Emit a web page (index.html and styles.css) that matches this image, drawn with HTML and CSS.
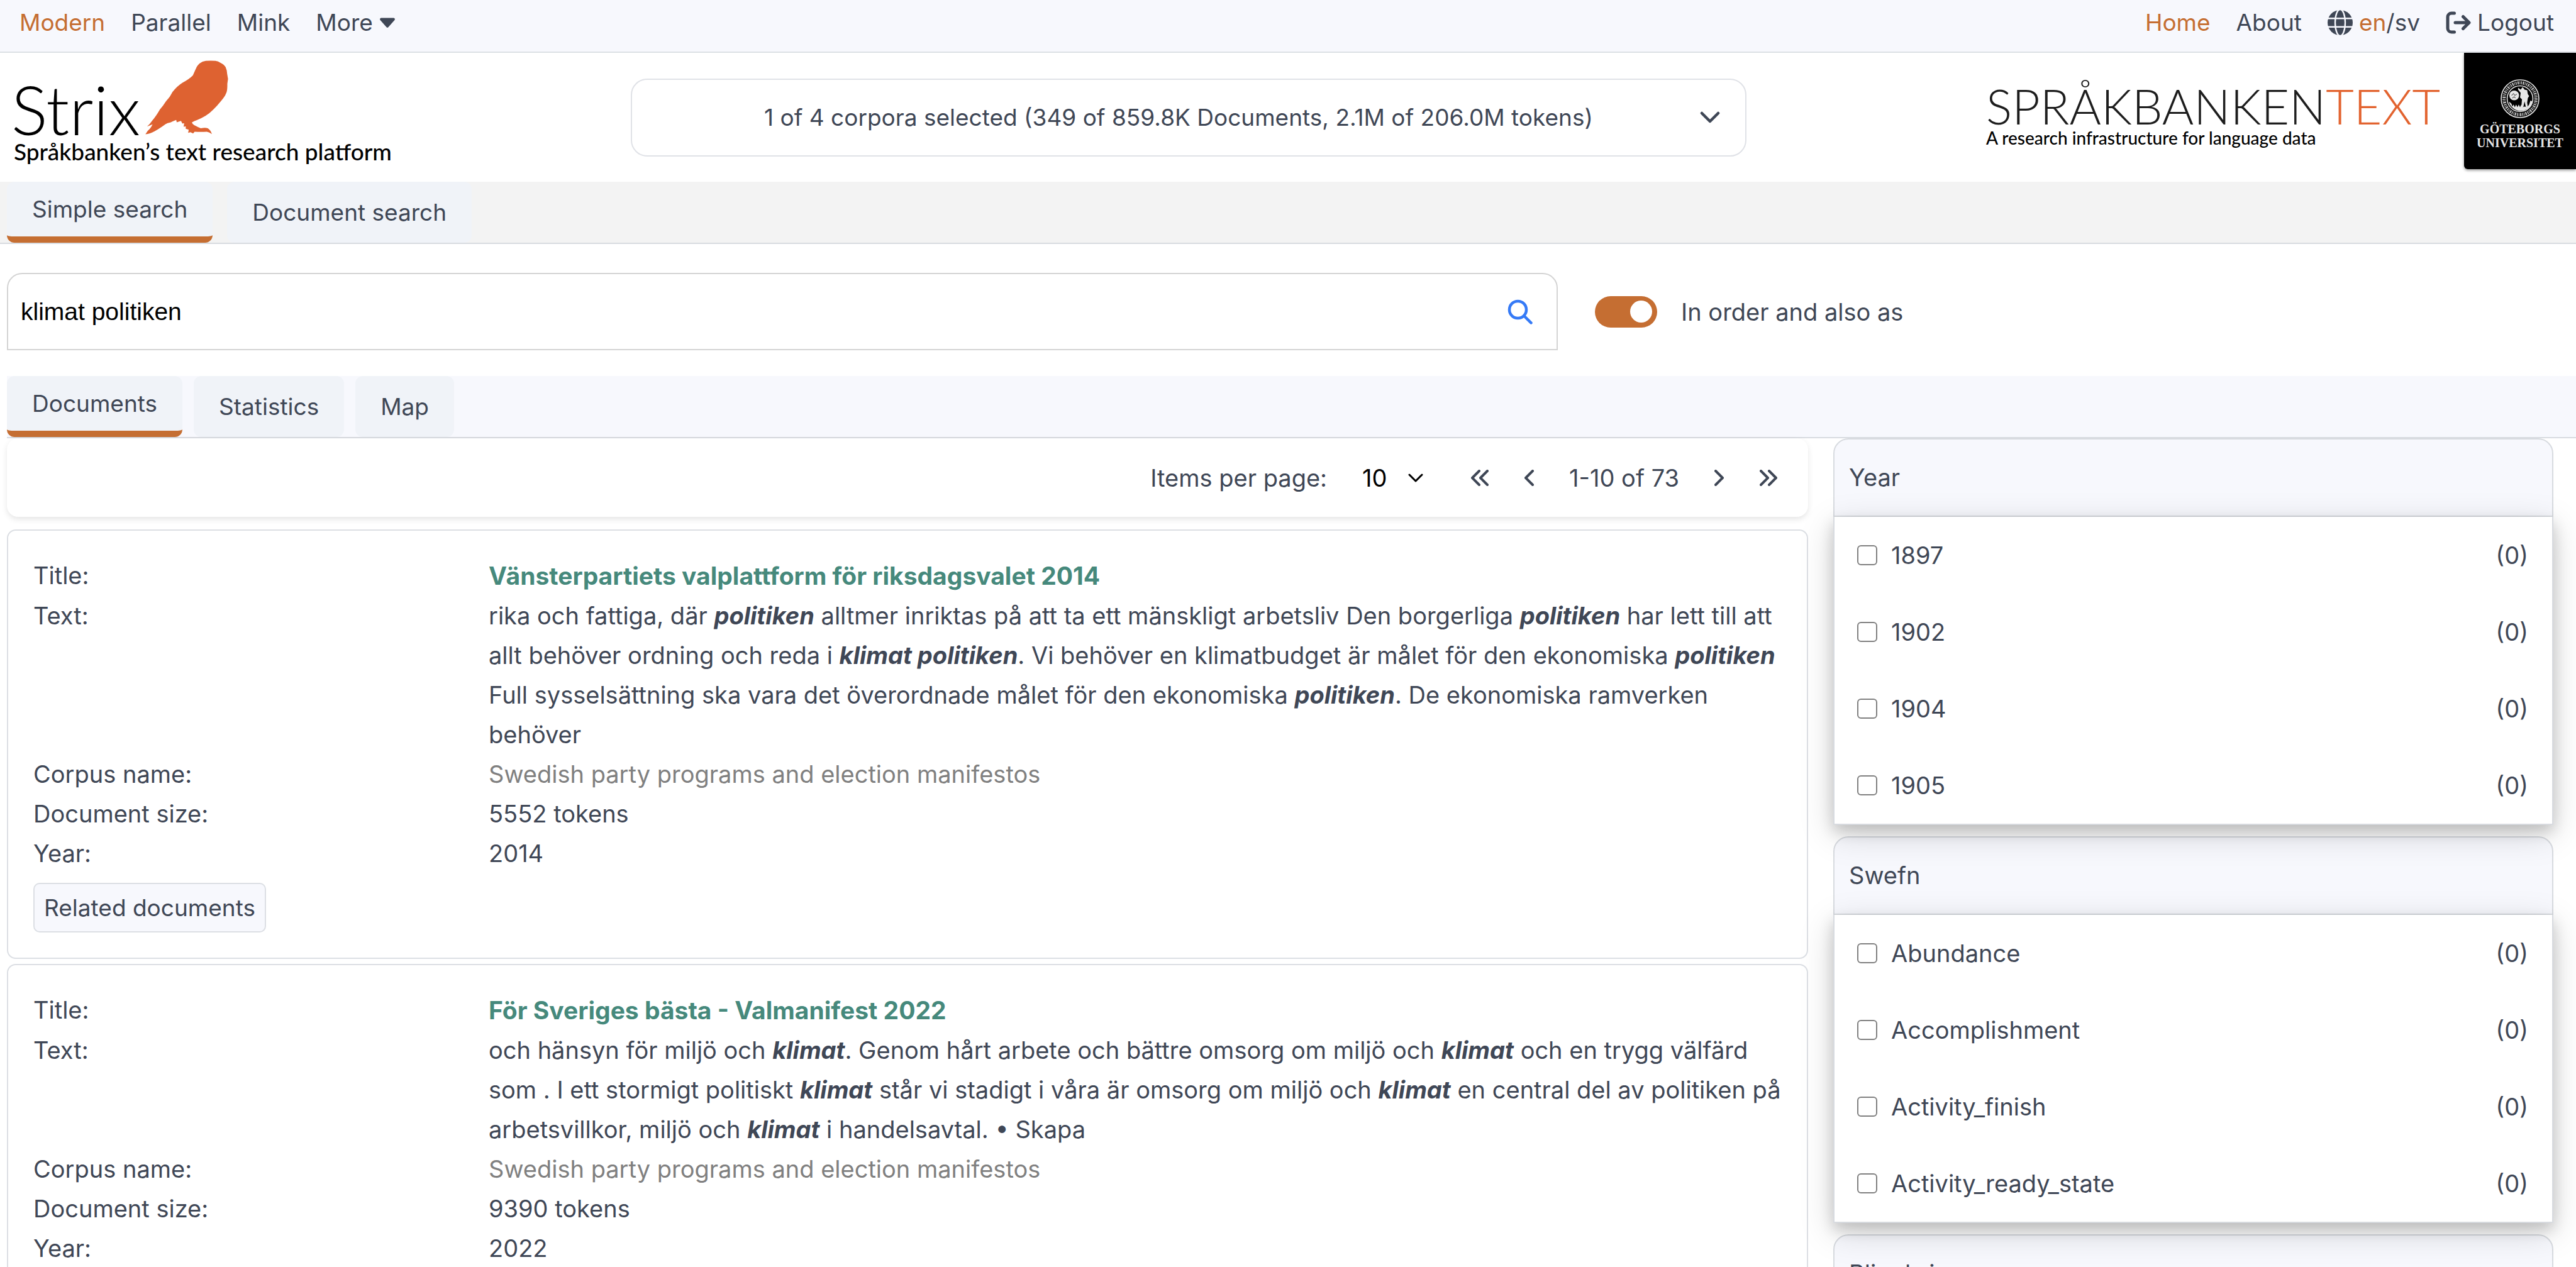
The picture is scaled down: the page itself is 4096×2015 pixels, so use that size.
FILE: index.html
```
<!DOCTYPE html>
<html lang="en">
<head>
<meta charset="utf-8">
<title>Strix</title>
<link rel="stylesheet" href="styles.css">
</head>
<body>
<nav class="topbar">
  <div class="topbar-group">
    <a class="current" href="#modern">Modern</a>
    <a href="#parallel">Parallel</a>
    <a href="#mink">Mink</a>
    <button class="more" type="button">More
      <svg class="caret" viewBox="0 0 24 16" aria-hidden="true"><path d="M3 1h18a2 2 0 0 1 1.500 3.300l-9 10.200a2 2 0 0 1-3 0l-9-10.200A2 2 0 0 1 3 1z" fill="currentColor"/></svg>
    </button>
  </div>
  <div class="topbar-group">
    <a class="current" href="#home">Home</a>
    <a href="#about">About</a>
    <a class="language" href="#language">
      <svg class="globe" viewBox="0 0 40 40" aria-hidden="true"><circle cx="20" cy="20" r="20" fill="currentColor"/><g fill="none" stroke="#f7f8fd" stroke-width="2.400"><ellipse cx="20" cy="20" rx="8" ry="21"/><path d="M0 13.200h40M0 26.800h40"/></g></svg>
      <span><span class="current">en</span>/sv</span>
    </a>
    <a class="logout" href="#logout">
      <svg class="exit" viewBox="0 0 40 36" aria-hidden="true"><g fill="none" stroke="currentColor" stroke-width="5" stroke-linecap="round" stroke-linejoin="round"><path d="M13.500 3H9a6 6 0 0 0-6 6v18a6 6 0 0 0 6 6h4.500"/><path d="M15 18h21M27.500 8.500L37 18l-9.500 9.500"/></g></svg>
      Logout
    </a>
  </div>
</nav>

<header class="header">
  <a class="strix" href="#home">
    <span class="strix-mark">
      <span class="strix-name">Strix</span>
      <svg class="owl" viewBox="40 45 602 540" aria-hidden="true"><path fill="#de6231" d="M480 49 Q515 45 550 49 Q570 52 585 62 Q612 75 623 93 Q633 113 635 145 L641 180 L636 215 Q637 260 630 278 Q622 300 608 318 Q596 334 584 348 Q560 378 535 402 Q508 430 477 449 Q445 468 415 480 Q392 488 378 497 Q382 508 393 515 Q420 530 443 539 Q475 533 494 539 Q515 552 524 582 Q505 566 487 564 Q445 568 398 564 L387 577 L368 568 L351 572 L355 550 L333 543 L334 525 L318 528 L322 503 L309 505 L299 486 L268 496 L264 479 Q240 488 222 497 Q200 500 186 509 Q140 543 107 561 Q75 580 40 583 L57 557 Q78 542 92 511 L52 527 Q75 505 88 485 Q115 455 145 403 Q170 375 190 343 Q218 315 237 275 Q270 232 310 207 Q355 185 385 155 Q396 130 405 110 Q418 80 435 67 Q455 51 480 49z"/></svg>
    </span>
    <span class="strix-tagline">Språkbanken’s text research platform</span>
  </a>
  <button class="corpora" type="button">
    <span class="corpora-text">1 of 4 corpora selected (349 of 859.8K Documents, 2.1M of 206.0M tokens)</span>
    <svg class="corpora-chevron" viewBox="0 0 32 20" aria-hidden="true"><path d="M3 3l13 13L29 3" fill="none" stroke="currentColor" stroke-width="4.500" stroke-linecap="round" stroke-linejoin="round"/></svg>
  </button>
  <div class="owners">
    <a class="bank" href="#sprakbanken">
      <span class="bank-name">SPRÅKBANKEN<span class="bank-text">TEXT</span></span>
      <span class="bank-tagline">A research infrastructure for language data</span>
    </a>
    <a class="university" href="#gu">
      <svg class="seal" viewBox="-30 -30 60 60" aria-hidden="true">
        <g fill="none" stroke="#e6e6e6"><circle r="29" stroke-width="1.600"/><circle r="24.500" stroke-width="5" stroke-dasharray="1.500 1.300 2.200 1.100 1 1.200" stroke="#bdbdbd"/><circle r="19.800" stroke-width="1.500"/></g>
        <g fill="#e6e6e6"><circle cx="-9" cy="-5" r="7.500"/><path d="M-3-17l4 3 3-4 3 4 4 1 1 6 2 3-2 3-1 7 1 7h-3l-2-9-2 9h-3l1-12-3-3 1-7-4-5z"/><path d="M-16 5l3 3 1 4 2-3 2 4 2-4 2 4 2-4 2 4 2-4 2 4 3-1 4 1 3-4 2-6 3 1q-1 8-8 12-11 6-21-1-6-5-7-10z"/></g>
        <path d="M-13-5l3-3 2 3 3-2M-12-1l3-2 2 2" fill="none" stroke="#555" stroke-width="1"/>
      </svg>
      <span class="university-name">GÖTEBORGS<br>UNIVERSITET</span>
    </a>
  </div>
</header>

<div class="tabs search-tabs">
  <button class="tab active" type="button">Simple search</button>
  <button class="tab" type="button">Document search</button>
</div>

<form class="search" onsubmit="return false">
  <div class="search-box">
    <input class="search-input" type="text" value="klimat politiken" aria-label="Search">
    <button class="search-button" type="submit" aria-label="Search">
      <svg class="search-icon" viewBox="0 0 40 40" aria-hidden="true"><g fill="none" stroke="currentColor" stroke-width="4.500" stroke-linecap="round"><circle cx="16.500" cy="16.500" r="13.500"/><path d="M26.500 26.500L37.500 37.500"/></g></svg>
    </button>
  </div>
  <label class="order"><input class="toggle" type="checkbox" checked>In order and also as</label>
</form>

<div class="tabs result-tabs">
  <button class="tab active" type="button">Documents</button>
  <button class="tab" type="button">Statistics</button>
  <button class="tab" type="button">Map</button>
</div>

<main class="main">
  <section class="results">
    <div class="pager">
      <label for="per-page">Items per page:</label>
      <span class="per-page">
        <select id="per-page"><option>10</option></select>
        <svg class="per-page-chevron" viewBox="0 0 24 16" aria-hidden="true"><path d="M2 3l10 10L22 3" fill="none" stroke="#000" stroke-width="3" stroke-linecap="round" stroke-linejoin="round"/></svg>
      </span>
      <button class="step first" type="button" aria-label="First page"><svg class="double" viewBox="0 0 28 26" aria-hidden="true"><path d="M13 2L2 13l11 11M26 2L15 13l11 11"/></svg></button>
      <button class="step" type="button" aria-label="Previous page"><svg class="single" viewBox="0 0 16 26" aria-hidden="true"><path d="M14 2L3 13l11 11"/></svg></button>
      <span>1-10 of 73</span>
      <button class="step" type="button" aria-label="Next page"><svg class="single" viewBox="0 0 16 26" aria-hidden="true"><path d="M2 2l11 11L2 24"/></svg></button>
      <button class="step" type="button" aria-label="Last page"><svg class="double" viewBox="0 0 28 26" aria-hidden="true"><path d="M2 2l11 11L2 24M15 2l11 11-11 11"/></svg></button>
    </div>

    <article class="card">
      <dl class="fields">
        <dt>Title:</dt><dd><a class="title" href="#doc-1">Vänsterpartiets valplattform för riksdagsvalet 2014</a></dd>
        <dt>Text:</dt><dd>rika och fattiga, där <em>politiken</em> alltmer inriktas på att ta ett mänskligt arbetsliv Den borgerliga <em>politiken</em> har lett till att allt behöver ordning och reda i <em>klimat politiken</em>. Vi behöver en klimatbudget är målet för den ekonomiska <em>politiken</em> Full sysselsättning ska vara det överordnade målet för den ekonomiska <em>politiken</em>. De ekonomiska ramverken behöver</dd>
        <dt>Corpus name:</dt><dd class="corpus">Swedish party programs and election manifestos</dd>
        <dt>Document size:</dt><dd>5552 tokens</dd>
        <dt>Year:</dt><dd>2014</dd>
      </dl>
      <button class="related" type="button">Related documents</button>
    </article>

    <article class="card">
      <dl class="fields">
        <dt>Title:</dt><dd><a class="title" href="#doc-2">För Sveriges bästa - Valmanifest 2022</a></dd>
        <dt>Text:</dt><dd>och hänsyn för miljö och <em>klimat</em>. Genom hårt arbete och bättre omsorg om miljö och <em>klimat</em> och en trygg välfärd som . I ett stormigt politiskt <em>klimat</em> står vi stadigt i våra är omsorg om miljö och <em>klimat</em> en central del av politiken på arbetsvillkor, miljö och <em>klimat</em> i handelsavtal. • Skapa</dd>
        <dt>Corpus name:</dt><dd class="corpus">Swedish party programs and election manifestos</dd>
        <dt>Document size:</dt><dd>9390 tokens</dd>
        <dt>Year:</dt><dd>2022</dd>
      </dl>
    </article>
  </section>

  <aside class="facets">
    <section class="facet">
      <h2 class="facet-title">Year</h2>
      <div class="facet-body">
        <label class="option"><input type="checkbox">1897<span class="count">(0)</span></label>
        <label class="option"><input type="checkbox">1902<span class="count">(0)</span></label>
        <label class="option"><input type="checkbox">1904<span class="count">(0)</span></label>
        <label class="option"><input type="checkbox">1905<span class="count">(0)</span></label>
      </div>
    </section>
    <section class="facet">
      <h2 class="facet-title">Swefn</h2>
      <div class="facet-body">
        <label class="option"><input type="checkbox">Abundance<span class="count">(0)</span></label>
        <label class="option"><input type="checkbox">Accomplishment<span class="count">(0)</span></label>
        <label class="option"><input type="checkbox">Activity_finish<span class="count">(0)</span></label>
        <label class="option"><input type="checkbox">Activity_ready_state<span class="count">(0)</span></label>
      </div>
    </section>
    <section class="facet">
      <h2 class="facet-title">Blingbring</h2>
    </section>
  </aside>
</main>
</body>
</html>
```
FILE: styles.css
```
:root {
  --ink: #3f4756;
  --accent: #c56e32;
  --line: #d8dbe0;
  --pale: #f7f8fd;
  --tab: #f0f3f8;
}

* {
  box-sizing: border-box;
}

body {
  margin: 0;
  height: 100vh;
  overflow: hidden;
  background: #fff;
  color: var(--ink);
  font: 38px/48px Inter, "Noto Sans", sans-serif;
}

a {
  color: inherit;
  text-decoration: none;
}

button {
  margin: 0;
  padding: 0;
  border: 0;
  background: none;
  color: inherit;
  font: inherit;
}

svg {
  display: block;
  flex: none;
}

/* Top bar */

.topbar {
  display: flex;
  justify-content: space-between;
  padding: 12px 35px 22px 31px;
  border-bottom: 2px solid #dce0e5;
  background: var(--pale);
  font-size: 37px;
}

.topbar-group {
  display: flex;
  gap: 41px;
}

.topbar .current {
  color: var(--accent);
}

.more,
.language,
.logout {
  display: flex;
  align-items: center;
  gap: 10px;
}

.caret {
  width: 26px;
  height: 18px;
}

.globe {
  width: 40px;
  height: 40px;
}

.exit {
  width: 40px;
  height: 36px;
}

/* Header */

.header {
  display: grid;
  grid-template-columns: 1003fr 1774fr 1319fr;
  height: 205px;
}

.strix {
  display: flex;
  flex-direction: column;
  padding: 12px 0 0 18px;
  color: #000;
  font-family: Lato, "Noto Sans", sans-serif;
}

.strix-mark {
  display: flex;
  align-items: flex-end;
  gap: 8px;
  height: 121px;
}

.strix-name {
  font-size: 108px;
  font-weight: 300;
  line-height: 88px;
}

.owl {
  width: 132px;
  height: 118px;
  align-self: flex-start;
}

.strix-tagline {
  padding-left: 4px;
  font-size: 37px;
  font-weight: 500;
  line-height: 48px;
}

.corpora {
  display: flex;
  align-items: center;
  height: 124px;
  margin-top: 41px;
  padding: 0 40px;
  border: 2px solid #e0e2e7;
  border-radius: 26px;
  font-size: 37px;
}

.corpora-text {
  flex: 1;
}

.corpora-chevron {
  width: 32px;
  height: 20px;
}

.owners {
  display: flex;
  justify-content: flex-end;
  align-items: flex-start;
  gap: 38px;
}

.bank {
  display: flex;
  flex-direction: column;
  padding-top: 49px;
  color: #1d1d1d;
  font-family: Lato, "Noto Sans", sans-serif;
}

.bank-name {
  font-size: 77px;
  font-weight: 300;
  line-height: 70px;
}

.bank-text {
  color: #e2632f;
}

.bank-tagline {
  color: #000;
  font-size: 28px;
  font-weight: 500;
  line-height: 32px;
}

.university {
  display: flex;
  flex-direction: column;
  align-items: center;
  gap: 6px;
  width: 178px;
  height: 185px;
  padding-top: 42px;
  border-bottom-left-radius: 6px;
  background: #000;
  box-shadow: 0 2px 4px rgba(0, 0, 0, .4);
  color: #e6e6e6;
  font: 700 20px/22px "Liberation Serif", serif;
  text-align: center;
}

.seal {
  width: 62px;
  height: 62px;
}

/* Tabs */

.tabs {
  display: flex;
  border-bottom: 2px solid var(--line);
}

.search-tabs {
  gap: 23px;
  padding-left: 11px;
  background: #f3f3f3;
}

.result-tabs {
  gap: 18px;
  margin-left: 11px;
  background: var(--pale);
}

.tab {
  height: 97px;
  padding: 0 40px;
  border-radius: 12px;
  background: var(--tab);
  font-size: 37px;
}

.tab.active {
  border-bottom: 10px solid var(--accent);
}

/* Search */

.search {
  display: grid;
  grid-template-columns: 2466fr 1560fr;
  gap: 59px;
  padding: 46px 0 41px 11px;
}

.search-box {
  display: flex;
  align-items: center;
  height: 123px;
  padding: 0 38px 0 20px;
  border: 2px solid #d4d4d4;
  border-radius: 24px 24px 0 0;
}

.search-input {
  flex: 1;
  height: 100%;
  padding: 0;
  border: 0;
  outline: 0;
  background: none;
  color: #000;
  font: 39px "Liberation Sans", sans-serif;
}

.search-button {
  color: #357af6;
}

.search-icon {
  width: 40px;
  height: 40px;
}

.order {
  display: flex;
  align-items: center;
  gap: 38px;
}

.toggle {
  appearance: none;
  display: flex;
  justify-content: flex-end;
  align-items: center;
  width: 99px;
  height: 50px;
  margin: 0;
  padding: 8px;
  border-radius: 25px;
  background: var(--accent);
}

.toggle::before {
  content: "";
  width: 35px;
  height: 35px;
  border-radius: 50%;
  background: #fff;
}

/* Results */

.main {
  display: grid;
  grid-template-columns: 2864fr 1145fr;
  gap: 40px;
  align-items: start;
  padding: 0 36px 0 11px;
}

.pager {
  display: flex;
  justify-content: flex-end;
  align-items: center;
  gap: 56px;
  height: 125px;
  margin-bottom: 20px;
  padding-right: 49px;
  border-radius: 18px;
  box-shadow: 0 4px 10px rgba(0, 0, 0, .1);
}

.per-page {
  display: grid;
  align-items: center;
  width: 97px;
}

.per-page select,
.per-page-chevron {
  grid-area: 1 / 1;
}

.per-page select {
  appearance: none;
  padding: 0;
  border: 0;
  background: none;
  color: #000;
  font: inherit;
}

.per-page-chevron {
  justify-self: end;
  width: 24px;
  height: 16px;
}

.step.first {
  margin-left: 20px;
}

.step path {
  fill: none;
  stroke: currentColor;
  stroke-width: 4;
  stroke-linecap: round;
  stroke-linejoin: round;
}

.single {
  width: 16px;
  height: 26px;
}

.double {
  width: 28px;
  height: 26px;
}

.card {
  margin-bottom: 8px;
  padding: 40px 30px 40px 40px;
  border: 2px solid #dcdfe4;
  border-radius: 14px;
}

.fields {
  display: grid;
  grid-template-columns: 724fr 2066fr;
  margin: 0;
  line-height: 63px;
}

.fields dd {
  margin: 0;
}

.title {
  color: #46897c;
  font-size: 39px;
  font-weight: 700;
}

.fields em {
  font-weight: 700;
}

.corpus {
  color: #808080;
}

.related {
  height: 79px;
  margin-top: 15px;
  padding: 0 15px;
  border: 2px solid #dcdfe4;
  border-radius: 10px;
  background: var(--pale);
  font-size: 37px;
}

/* Facets */

.facets {
  display: flex;
  flex-direction: column;
  gap: 18px;
}

.facet-title {
  height: 125px;
  margin: 0;
  padding: 0 23px;
  border: 2px solid var(--line);
  border-radius: 24px 24px 0 0;
  background: var(--pale);
  font-size: inherit;
  font-weight: 400;
  line-height: 121px;
}

.facet-body {
  position: relative;
  z-index: 1;
  border: 2px solid var(--line);
  border-top: 0;
  background: #fff;
  box-shadow: 0 10px 21px rgba(0, 0, 0, .16), 0 14px 50px rgba(0, 0, 0, .17);
}

.option {
  display: flex;
  align-items: center;
  gap: 22px;
  height: 122px;
  padding: 0 38px 0 36px;
}

.option input {
  appearance: none;
  width: 32px;
  height: 32px;
  margin: 0;
  border: 2px solid #808080;
  border-radius: 6px;
}

.count {
  margin-left: auto;
}
```
